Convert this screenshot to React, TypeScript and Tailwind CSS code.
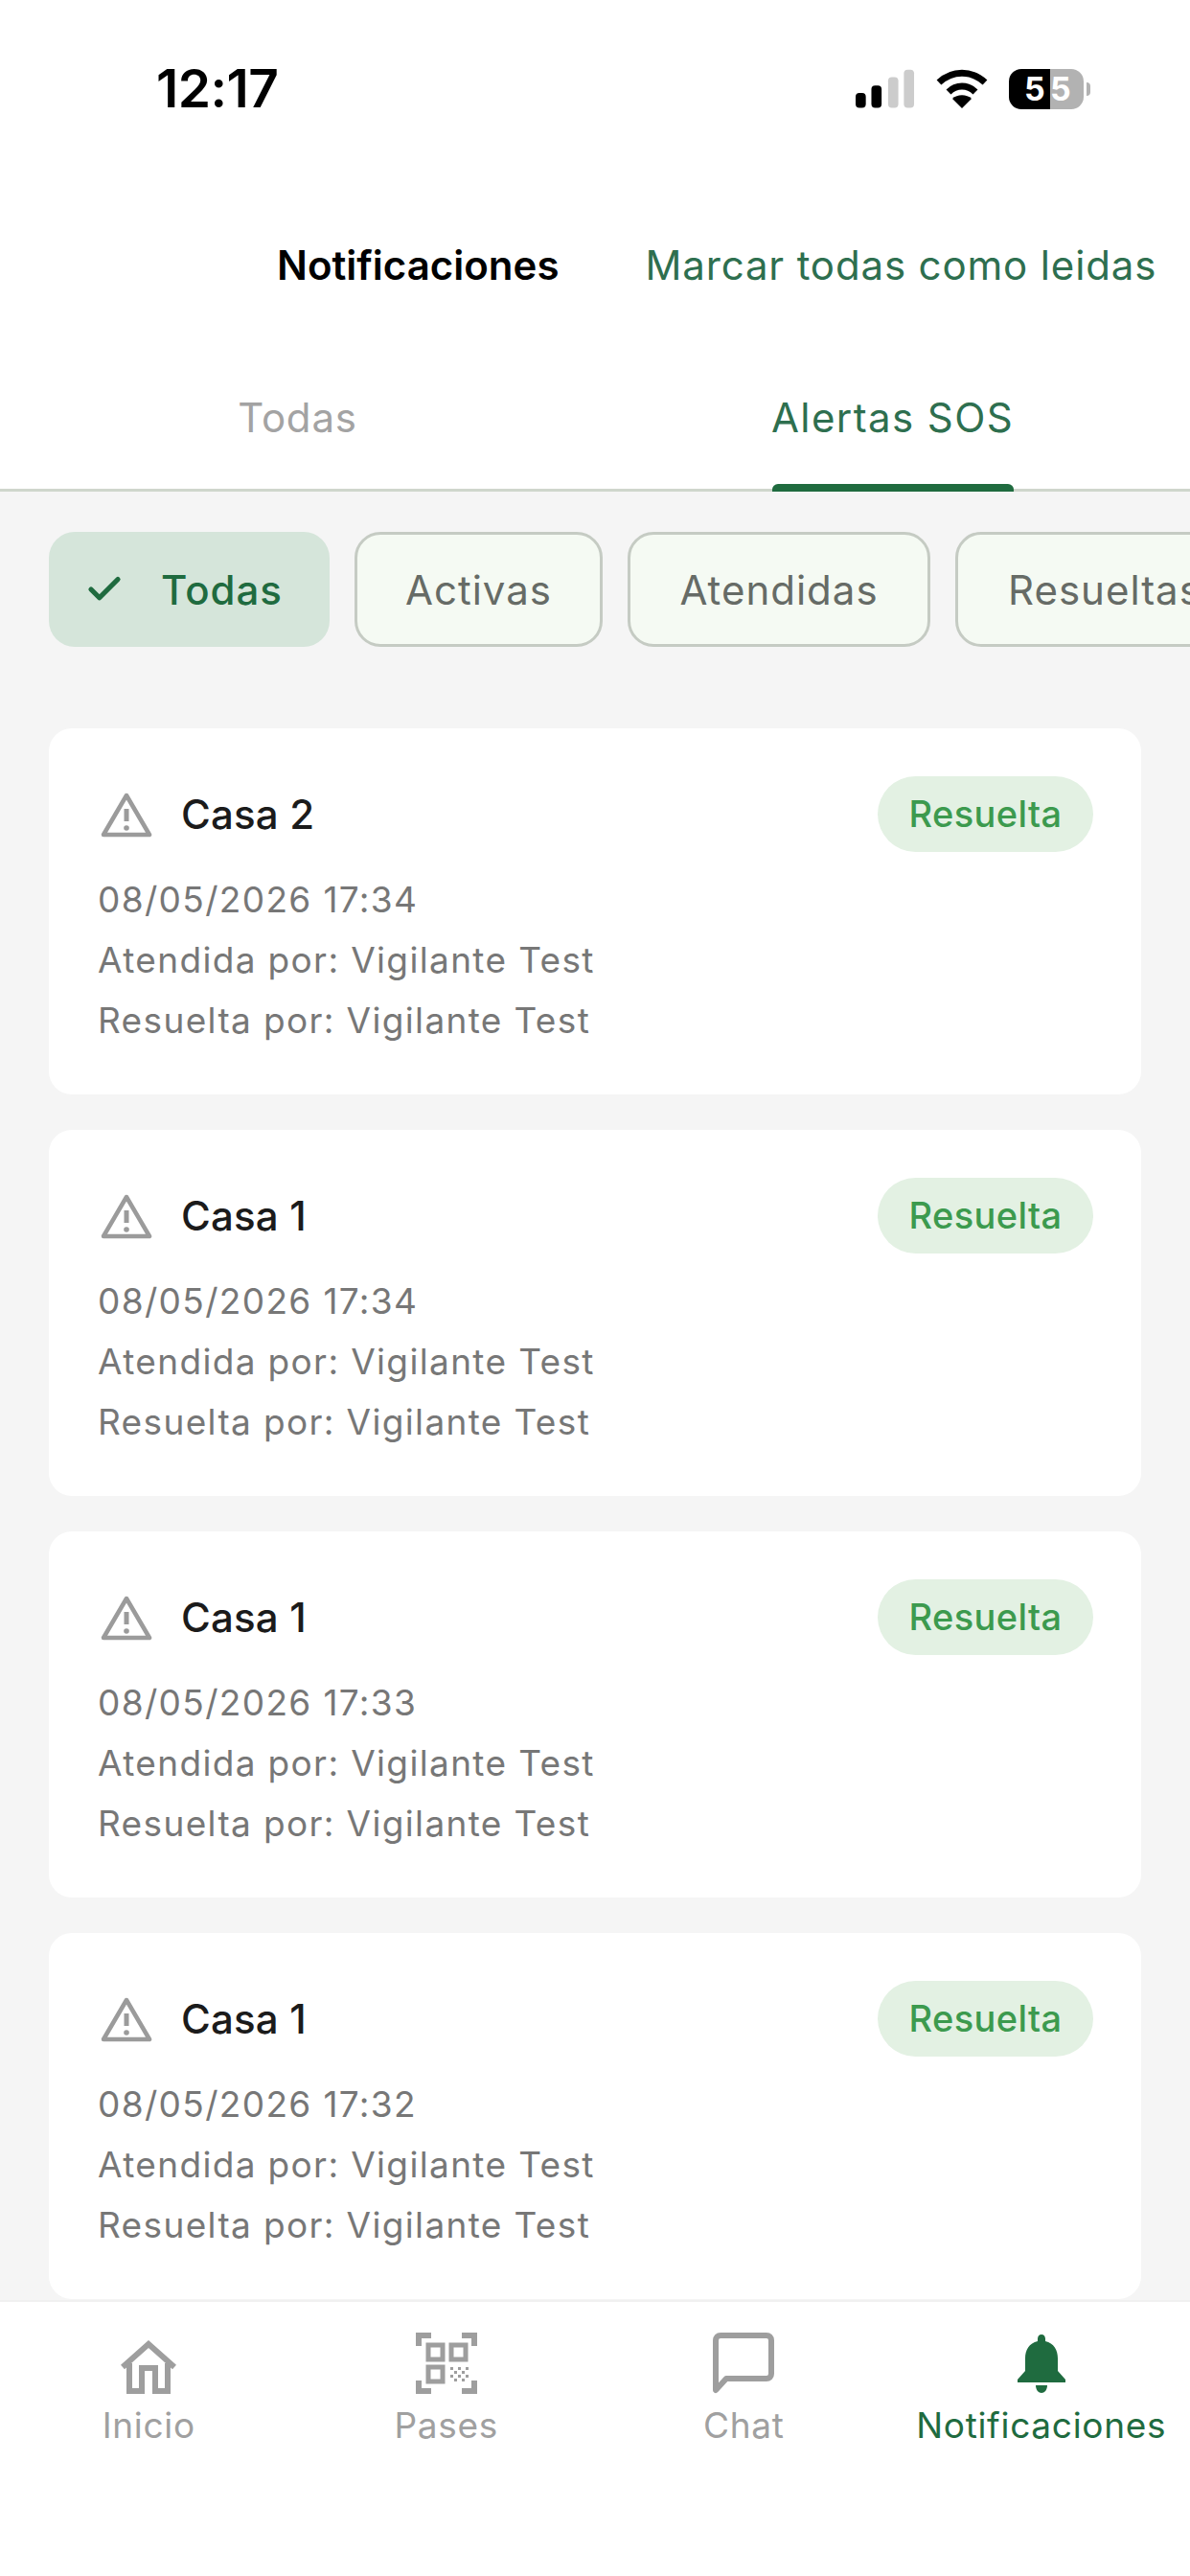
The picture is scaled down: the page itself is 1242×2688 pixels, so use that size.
import { Check } from 'lucide-react';

const alerts = [
  { casa: 'Casa 2', fecha: '08/05/2026 17:34' },
  { casa: 'Casa 1', fecha: '08/05/2026 17:34' },
  { casa: 'Casa 1', fecha: '08/05/2026 17:33' },
  { casa: 'Casa 1', fecha: '08/05/2026 17:32' },
];

function StatusIcons() {
  return (
    <div className="flex items-center gap-[22px]">
      <svg width="62" height="42" viewBox="0 0 64 42" fill="#000">
        <rect x="0" y="25" width="11" height="16" rx="4" />
        <rect x="17" y="17" width="11" height="24" rx="4" />
        <rect x="35" y="8" width="11" height="33" rx="4" fill="#ccc" />
        <rect x="52" y="0" width="11" height="41" rx="4" fill="#ccc" />
      </svg>
      <svg width="54" height="42" viewBox="0 0 54 42" fill="none" stroke="#000" strokeWidth="7">
        <path d="M3 14C17 1 37 1 51 14" />
        <path d="M13 24C21 16 33 16 41 24" />
        <path d="M27 41L17 31C22 26 32 26 37 31Z" fill="#000" stroke="none" />
      </svg>
      <div className="flex items-center gap-[3px]">
        <div className="flex h-[42px] w-[78px] overflow-hidden rounded-[13px] text-[34px] font-bold leading-[42px] text-white">
          <span className="w-[43px] bg-black pl-[16px]">5</span>
          <span className="w-[35px] bg-[#b2b2b2]">5</span>
        </div>
        <div className="h-[14px] w-[4px] rounded-r-full bg-[#b2b2b2]" />
      </div>
    </div>
  );
}

function WarningIcon() {
  return (
    <svg width="54" height="48" viewBox="0 0 54 48" fill="none" stroke="#9b9b9b" strokeWidth="4.5" strokeLinejoin="round">
      <path d="M27 4L51 45H3Z" />
      <path d="M27 18V31" strokeWidth="5" />
      <circle cx="27" cy="38" r="2.8" fill="#9b9b9b" stroke="none" />
    </svg>
  );
}

function HomeIcon() {
  return (
    <svg width="62" height="56" viewBox="0 0 62 56" fill="none" stroke="#9e9e9e" strokeWidth="6">
      <path d="M4 28L31 4L58 28" strokeLinejoin="miter" />
      <path d="M11 24V53H24V29H38V53H51V24" />
    </svg>
  );
}

function QrIcon() {
  return (
    <svg width="64" height="64" viewBox="0 0 64 64" fill="none" stroke="#9e9e9e" strokeWidth="5">
      <path d="M16 3H3V14M48 3H61V14M16 61H3V50M48 61H61V50" strokeWidth="6" />
      <rect x="13" y="13" width="15" height="15" />
      <rect x="37" y="13" width="15" height="15" />
      <rect x="13" y="36" width="15" height="15" />
      <path d="M36 36h3v3h-3zM44 36h3v3h-3zM52 36h3v3h-3zM40 40h3v3h-3zM48 40h3v3h-3zM36 44h3v3h-3zM44 44h3v3h-3zM52 44h3v3h-3zM40 48h3v3h-3zM48 48h3v3h-3z" fill="#9e9e9e" stroke="none" />
    </svg>
  );
}

function ChatIcon() {
  return (
    <svg width="64" height="64" viewBox="0 0 64 64" fill="none" stroke="#9e9e9e" strokeWidth="6" strokeLinejoin="round">
      <path d="M8 3H56C59 3 61 5 61 8V43C61 46 59 48 56 48H14L3 60V8C3 5 5 3 8 3Z" />
    </svg>
  );
}

function BellIcon() {
  return (
    <svg width="52" height="62" viewBox="0 0 52 62" fill="#1f6b3f">
      <path d="M26 0C28.5 0 30 2 30 4.5V7C39 9 43 16 43 25V38L51 47V50H1V47L9 38V25C9 16 13 9 22 7V4.5C22 2 23.500 0 26 0Z" />
      <path d="M20 53H32C32 58 29 61 26 61C23 61 20 58 20 53Z" />
    </svg>
  );
}

function AlertCard({ casa, fecha }: { casa: string; fecha: string }) {
  return (
    <div className="h-[382px] shrink-0 rounded-[24px] bg-white pl-[51px] pr-[50px] pt-[50px]">
      <div className="flex h-[79px] items-center justify-between">
        <div className="flex items-center gap-[30px] pl-[3px]">
          <WarningIcon />
          <span className="text-[42px] font-medium tracking-[0.2px] text-[#1b1b1b]">{casa}</span>
        </div>
        <span className="flex h-[79px] w-[225px] items-center justify-center rounded-full bg-[#e3f1e3] text-[38px] font-medium tracking-[0.4px] text-[#3c9a4e]">
          Resuelta
        </span>
      </div>
      <div className="mt-[18px] text-[37px] leading-[63px] tracking-[1.35px] text-[#777]">
        <div>{fecha}</div>
        <div>Atendida por: Vigilante Test</div>
        <div>Resuelta por: Vigilante Test</div>
      </div>
    </div>
  );
}

export default function App() {
  return (
    <div className="flex h-[2688px] w-[1242px] flex-col overflow-hidden bg-white font-['Inter',sans-serif]">
      {/* status bar */}
      <div className="flex h-[185px] shrink-0 items-center justify-between pl-[163px] pr-[104px]">
        <span className="text-[55px] font-semibold tracking-[-0.5px] text-black">12:17</span>
        <StatusIcons />
      </div>

      {/* header */}
      <div className="flex h-[182px] shrink-0 items-center pl-[289px]">
        <span className="text-[42px] font-semibold text-black">Notificaciones</span>
        <span className="ml-[90px] whitespace-nowrap text-[42px] tracking-[0.85px] text-[#2e6f4f]">Marcar todas como leidas</span>
      </div>

      {/* tabs */}
      <div className="grid h-[146px] shrink-0 grid-cols-2 border-b-[3px] border-[#cfd6cc] text-[42px]">
        <div className="flex justify-center leading-[138px] tracking-[0.8px] text-[#a3a3a3]">Todas</div>
        <div className="relative flex justify-center leading-[138px] tracking-[1.4px] text-[#2e6f4f]">
          Alertas SOS
          <div className="absolute bottom-[-3px] left-[185px] h-[8px] w-[252px] rounded-t-[6px] bg-[#1f6b3f]" />
        </div>
      </div>

      {/* list */}
      <div className="flex min-h-0 flex-1 flex-col overflow-hidden bg-[#f5f5f5] px-[51px]">
        <div className="mr-[-51px] mt-[42px] flex h-[120px] shrink-0 gap-[26px] text-[42px] tracking-[1px] text-[#666b66]">
          <div className="flex w-[293px] shrink-0 items-center gap-[38px] rounded-[27px] bg-[#d5e5da] pl-[37px] font-medium text-[#1f6b3f]">
            <Check size={42} strokeWidth={3} />
            Todas
          </div>
          <div className="flex w-[259px] shrink-0 items-center justify-center rounded-[27px] border-[3px] border-[#c5cbc3] bg-[#f5faf3]">Activas</div>
          <div className="flex w-[316px] shrink-0 items-center justify-center rounded-[27px] border-[3px] border-[#c5cbc3] bg-[#f5faf3]">Atendidas</div>
          <div className="flex w-[320px] shrink-0 items-center justify-start rounded-[27px] border-[3px] border-[#c5cbc3] bg-[#f5faf3] pl-[52px]">Resueltas</div>
        </div>
        <div className="mt-[85px] flex flex-col gap-[37px]">
          {alerts.map((a) => (
            <AlertCard key={a.fecha + a.casa} casa={a.casa} fecha={a.fecha} />
          ))}
        </div>
      </div>

      {/* bottom nav */}
      <div className="grid h-[288px] shrink-0 grid-cols-4 border-t-[2px] border-[#f0f0f0] bg-white text-[37px] tracking-[0.7px] text-[#a0a0a0]">
        <div className="flex flex-col items-center pt-[32px]">
          <div className="flex h-[64px] items-end"><HomeIcon /></div>
          <span className="mt-[5px]">Inicio</span>
        </div>
        <div className="flex flex-col items-center pt-[32px]">
          <div className="flex h-[64px] items-end"><QrIcon /></div>
          <span className="mt-[5px]">Pases</span>
        </div>
        <div className="flex flex-col items-center pt-[32px]">
          <div className="flex h-[64px] items-end"><ChatIcon /></div>
          <span className="mt-[5px]">Chat</span>
        </div>
        <div className="flex flex-col items-center pt-[32px]">
          <div className="flex h-[64px] items-end"><BellIcon /></div>
          <span className="mt-[5px] text-[#1f6b3f]">Notificaciones</span>
        </div>
      </div>
    </div>
  );
}
